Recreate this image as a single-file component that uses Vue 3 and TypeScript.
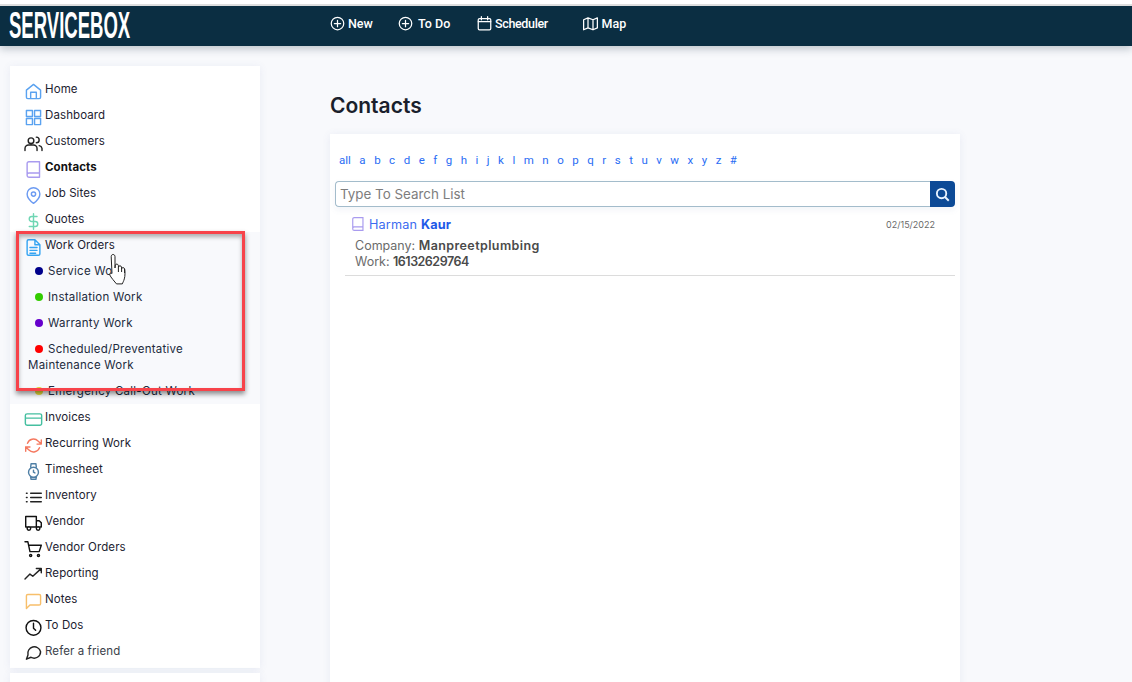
<script setup lang="ts">
interface NavItem { label: string; color: string; paths: string; bold?: boolean; muted?: boolean }

const book = 'M3 19.500A2.500 2.500 0 0 1 5.500 17H20.500 M5.500 1H20.500v22H5.500A2.500 2.500 0 0 1 3 20.500v-17A2.500 2.500 0 0 1 5.500 1z'
const before: NavItem[] = [
  { label: 'Home', color: '#5aa2f0', paths: 'M2 10l10-8 10 8v10a2 2 0 0 1-2 2H4a2 2 0 0 1-2-2z M8 22V13h8v9' },
  { label: 'Dashboard', color: '#5aa2f0', paths: 'M2 2h8.500v8.500H2z M13.500 2H22v8.500h-8.500z M13.500 13.500H22V22h-8.500z M2 13.500h8.500V22H2z' },
  { label: 'Customers', color: '#222', paths: 'M17 22v-3a5 5 0 0 0-5-5H5a5 5 0 0 0-5 5v3 M8.500 4a4 4 0 1 0 0 8 4 4 0 0 0 0-8z M24 22v-3a5 5 0 0 0-4-4 M16 3a4 4 0 0 1 0 8' },
  { label: 'Contacts', color: '#a99bef', bold: true, paths: book },
  { label: 'Job Sites', color: '#6c9bf2', paths: 'M21 10c0 7-9 13-9 13s-9-6-9-13a9 9 0 0 1 18 0z M12 7a3 3 0 1 0 0 6 3 3 0 0 0 0-6z' },
  { label: 'Quotes', color: '#6fd6b4', paths: 'M12 1v22 M17 5H9.500a3.500 3.500 0 0 0 0 7h5a3.500 3.500 0 0 1 0 7H6' },
]
const section: NavItem = { label: 'Work Orders', color: '#35a4f2', paths: 'M14 1H5a2 2 0 0 0-2 2v18a2 2 0 0 0 2 2h14a2 2 0 0 0 2-2V8z M14 1v7h7 M7 12h10 M7 16h10 M7 20h8' }
const subs = [
  { label: 'Service Work', color: '#00008b' },
  { label: 'Installation Work', color: '#33cc00' },
  { label: 'Warranty Work', color: '#6600cc' },
  { label: 'Scheduled/Preventative Maintenance Work', color: '#ff0000' },
  { label: 'Emergency Call-Out Work', color: '#e6d93a' },
]
const after: NavItem[] = [
  { label: 'Invoices', color: '#45bfa0', paths: 'M3 4h18a2.500 2.500 0 0 1 2.500 2.500v11A2.500 2.500 0 0 1 21 20H3a2.500 2.500 0 0 1-2.500-2.500v-11A2.500 2.500 0 0 1 3 4z M0.500 10h23' },
  { label: 'Recurring Work', color: '#f5785f', paths: 'M23 4v6h-6 M1 20v-6h6 M3.500 9a9 9 0 0 1 14.900-3.400L23 10 M1 14l4.600 4.400A9 9 0 0 0 20.500 15' },
  { label: 'Timesheet', color: '#4f7fa5', paths: 'M12 6a7 7 0 1 0 0 14 7 7 0 0 0 0-14z M12 10v3l2 1 M8 6l.6-5h6.800l.6 5 M8 20l.6 3h6.800l.6-3' },
  { label: 'Inventory', color: '#222', paths: 'M8 6h15 M8 12h15 M8 18h15 M2 6h1 M2 12h1 M2 18h1' },
  { label: 'Vendor', color: '#111', paths: 'M1 2h15v15H1z M16 8h4l3 3v6h-7z M5.500 16.500a2.500 2.500 0 1 0 0 5 2.500 2.500 0 0 0 0-5z M18.500 16.500a2.500 2.500 0 1 0 0 5 2.500 2.500 0 0 0 0-5z' },
  { label: 'Vendor Orders', color: '#111', paths: 'M0 1h4l3 14h13l3-9H5 M8 19a1.500 1.500 0 1 0 0 3 1.500 1.500 0 0 0 0-3z M19 19a1.500 1.500 0 1 0 0 3 1.500 1.500 0 0 0 0-3z' },
  { label: 'Reporting', color: '#222', paths: 'M0 17l7-7 4 3 11-10 M16 2h7v6' },
  { label: 'Notes', color: '#f7bf6b', paths: 'M22 15a2 2 0 0 1-2 2H7l-5 5V4a2 2 0 0 1 2-2h16a2 2 0 0 1 2 2z' },
  { label: 'To Dos', color: '#111', paths: 'M12 2a10.500 10.500 0 1 0 0 21 10.500 10.500 0 0 0 0-21z M12 6v7l3 3' },
  { label: 'Refer a friend', color: '#222', muted: true, paths: 'M22 9.500a9 9 0 0 1-13.500 7.800L2 20l2.200-6A9 9 0 1 1 22 9.500z' },
]
const letters = ['all', ...'abcdefghijklmnopqrstuvwxyz'.split(''), '#']
</script>

<template>
  <div class="page">
    <header class="topbar">
      <div class="logo">SERVICEBOX</div>
      <nav class="topnav">
        <a class="tl tl-new">
          <svg viewBox="0 0 24 24" class="ti"><circle cx="12" cy="12" r="10" /><path d="M12 7v10M7 12h10" /></svg>New
        </a>
        <a class="tl tl-todo">
          <svg viewBox="0 0 24 24" class="ti"><circle cx="12" cy="12" r="10" /><path d="M12 7v10M7 12h10" /></svg><span class="sp">To Do</span>
        </a>
        <a class="tl tl-sched">
          <svg viewBox="0 0 24 24" class="ti"><rect x="2" y="4" width="20" height="18" rx="2" /><path d="M7 1v5M17 1v5M2 9h20" /></svg><span class="tight">Scheduler</span>
        </a>
        <a class="tl tl-map">
          <svg viewBox="0 0 24 24" class="ti"><path d="M1 6v16l7-3 8 3 7-3V3l-7 3-8-3z M8 3v16 M16 6v16" /></svg>Map
        </a>
      </nav>
    </header>

    <div class="body">
      <aside class="side">
        <div class="card navcard">
          <div v-for="n in before" :key="n.label" class="row" :class="{ bold: n.bold }">
            <svg viewBox="0 0 24 24" class="ni" :style="{ stroke: n.color }"><path :d="n.paths" /></svg>
            <span>{{ n.label }}</span>
          </div>
          <div class="group">
            <div class="row">
              <svg viewBox="0 0 24 24" class="ni" :style="{ stroke: section.color }"><path :d="section.paths" /></svg>
              <span>{{ section.label }}</span>
            </div>
            <div v-for="s in subs" :key="s.label" class="sub">
              <i class="dot" :style="{ background: s.color }"></i>{{ s.label }}
            </div>
          </div>
          <div v-for="n in after" :key="n.label" class="row" :class="{ muted: n.muted }">
            <svg viewBox="0 0 24 24" class="ni" :style="{ stroke: n.color }"><path :d="n.paths" /></svg>
            <span>{{ n.label }}</span>
          </div>
        </div>
        <div class="card nextcard"></div>
      </aside>

      <main class="main">
        <h1>Contacts</h1>
        <section class="card list">
          <div class="alpha"><a v-for="l in letters" :key="l">{{ l }}</a></div>
          <div class="search">
            <div class="field">Type To Search List</div>
            <button class="go" type="button">
              <svg viewBox="0 0 24 24"><circle cx="10.500" cy="10.500" r="7.500" /><path d="M16 16l6 6" /></svg>
            </button>
          </div>
          <div class="contact">
            <div class="chead">
              <svg viewBox="0 0 24 24" class="bk"><path :d="book" /></svg>
              <span class="name">Harman <b>Kaur</b></span>
              <span class="date">02/15/2022</span>
            </div>
            <div class="meta first">Company: <b class="co">Manpreetplumbing</b></div>
            <div class="meta">Work: <b class="ph">16132629764</b></div>
          </div>
        </section>
      </main>
    </div>

    <div class="callout"></div>
    <svg class="cursor" viewBox="0 0 20 33">
      <path d="M4 1.500c1.300 0 2 1 2 2.200V15l.3-3c.5-1.300 2.600-1.200 3 .2l.2 1.800c.2-1.600 2.700-1.600 3 0l.2 1.500c.4-1.300 2.600-1.200 2.900.4.500 3 .6 7 -.3 10-.6 2.200-1.500 3.700-2 5H7.500C6 29 1.500 24 .8 22c-.5-1.500 1-2.600 2.200-1.500L2.200 3.700C2.200 2.500 2.800 1.500 4 1.500z" />
      <path d="M9.400 14v5M12.600 15v4M15.600 16v4" />
    </svg>
  </div>
</template>

<style>
html, body { margin: 0; background: #f8f9fc; }
</style>

<style scoped>
.page {
  position: relative;
  width: 1132px;
  height: 682px;
  overflow: hidden;
  background: #f8f9fc;
  font-family: Inter, "Open Sans", sans-serif;
  font-size: 11.500px;
  color: #1c2230;
  border-top: 4px solid #fff;
  box-sizing: border-box;
}
.topbar {
  height: 42px;
  box-sizing: border-box;
  border-top: 2px solid #dedede;
  background: #0b2e42;
  box-shadow: 0 3px 8px rgba(40, 60, 80, .28);
  display: flex;
  align-items: center;
  position: relative;
}
.logo {
  width: 330px;
  padding-left: 9px;
  box-sizing: border-box;
  color: #fff;
  font: 700 36px/1 "Liberation Sans", sans-serif;
  transform: scaleX(.515);
  transform-origin: 9px 50%;
  white-space: nowrap;
}
.topnav { display: flex; align-items: center; font: 500 12.500px Roboto, sans-serif; color: #fff; margin-top: -6px; }
.tl { display: flex; align-items: center; gap: 3px; }
.tl-new { width: 68px; }
.tl-todo { width: 79px; }
.tl-sched { width: 105px; }
.tl-map { gap: 4px; margin-left: .5px; }
.sp { margin-left: 2px; }
.tight { letter-spacing: -.35px; }
.ti { width: 15px; height: 15px; fill: none; stroke: #fff; stroke-width: 2; stroke-linecap: round; stroke-linejoin: round; }
.body { display: flex; height: 636px; }
.card { background: #fff; box-shadow: 0 1px 8px rgba(90, 110, 170, .1); }
.side { width: 330px; flex: none; padding: 20px 0 0 10px; box-sizing: border-box; }
.navcard { width: 250px; padding: 10px 0 4px; box-sizing: border-box; height: 602px; }
.nextcard { width: 250px; height: 40px; margin-top: 5px; }
.row {
  display: flex;
  align-items: flex-start;
  gap: 3px;
  height: 26px;
  padding: 5px 0 0 15px;
  box-sizing: border-box;
  line-height: 16px;
  letter-spacing: .1px;
}
.row.bold { font-weight: 700; color: #111; }
.row.muted { color: #3b3f4a; }
.ni {
  width: 17px;
  height: 17px;
  margin-top: 2px;
  flex: none;
  fill: none;
  stroke-width: 2;
  stroke-linecap: round;
  stroke-linejoin: round;
  overflow: visible;
}
.group { background: #f8f9fc; }
.sub { padding: 5px 10px 5px 18px; line-height: 16px; letter-spacing: .25px; color: #232b3d; }
.dot {
  display: inline-block;
  width: 8px;
  height: 8px;
  border-radius: 50%;
  margin: 0 5px 0 7px;
}
.main { width: 630px; }
h1 { margin: 0; box-sizing: content-box; height: 48px; padding-top: 40px; line-height: 40px; font-size: 21px; font-weight: 600; color: #1a1f2c; }
.list { height: 560px; padding: 0 5px; box-sizing: border-box; }
.alpha { display: flex; padding: 17px 0 0 4px; height: 47px; box-sizing: border-box; font: 400 11.500px/18px Roboto, sans-serif; color: #2a6df4; gap: 8.500px; }
.search { display: flex; height: 26px; box-shadow: 0 3px 6px rgba(90, 110, 170, .08); }
.field {
  flex: 1;
  box-sizing: border-box;
  border: 1px solid #a3bccb;
  border-right: 0;
  border-radius: 4px 0 0 4px;
  padding-left: 4px;
  line-height: 24px;
  font-size: 13.400px;
  color: #7d7d7d;
}
.go {
  width: 25px;
  padding: 0;
  border: 0;
  border-radius: 0 4px 4px 0;
  background: #0c4a96;
  display: flex;
  align-items: center;
  justify-content: center;
}
.go svg { width: 15px; height: 15px; fill: none; stroke: #e8f3ff; stroke-width: 3; }
.contact { margin-left: 10px; height: 68px; border-bottom: 1px solid #dcdcdc; }
.chead { display: flex; align-items: center; gap: 4px; padding: 8px 20px 0 6px; height: 26px; box-sizing: border-box; }
.bk { width: 14px; height: 14px; fill: none; stroke: #a99bef; stroke-width: 2; }
.name { font-size: 12.700px; letter-spacing: .15px; color: #3c6cf0; flex: 1; }
.name b { color: #1f5ae8; font-weight: 700; }
.date { font-size: 9px; color: #6a6a6a; }
.meta { padding-left: 10px; font-size: 12.500px; line-height: 16px; color: #6b6b6b; }
.meta.first { margin-top: 5px; }
.meta b { color: #4a4a4a; font-weight: 600; }
.co { letter-spacing: .4px; }
.ph { letter-spacing: -.5px; }
.callout {
  position: absolute;
  left: 16px;
  top: 227px;
  width: 229px;
  height: 160px;
  box-sizing: border-box;
  border: 3px solid #f7434a;
  box-shadow: 0 3px 5px rgba(0, 0, 0, .45), inset 0 3px 4px rgba(0, 0, 0, .3);
}
.cursor {
  position: absolute;
  left: 109px;
  top: 249px;
  width: 20px;
  height: 33px;
  fill: #fff;
  stroke: #222;
  stroke-width: 1;
}
</style>
